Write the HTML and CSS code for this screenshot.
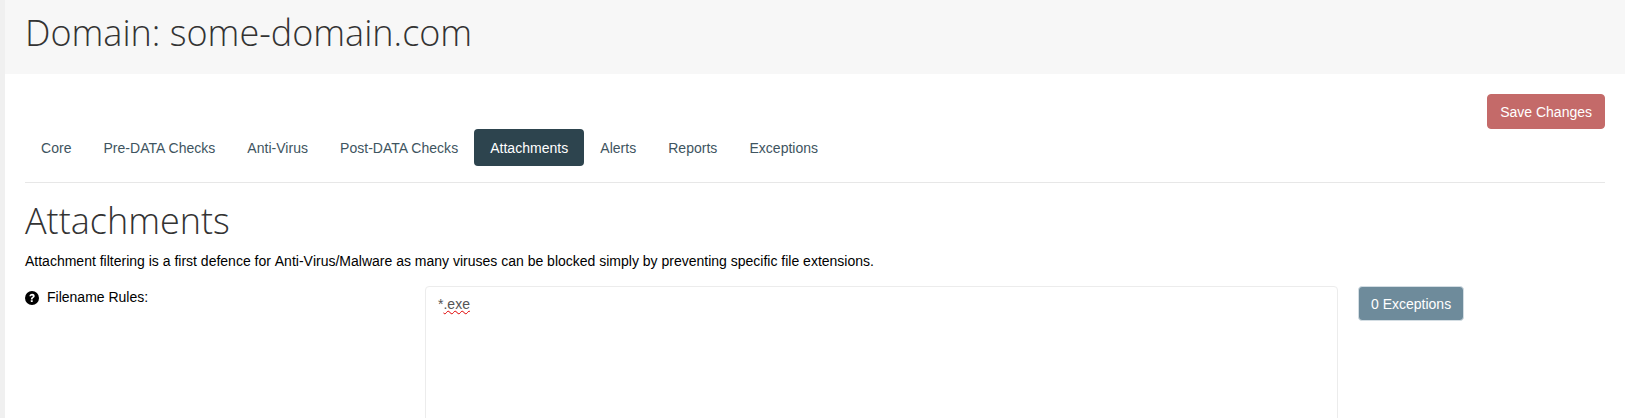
FILE: index.html
```html
<!DOCTYPE html>
<html lang="en">
<head>
<meta charset="utf-8">
<title>Domain: some-domain.com</title>
<link rel="stylesheet" href="styles.css">
</head>
<body>
<div class="page">
  <header class="page-header">
    <h1 class="page-title">Domain: some-domain.com</h1>
  </header>
  <main class="content">
    <div class="actions">
      <button class="btn btn-save" type="button">Save Changes</button>
    </div>
    <nav class="tabs">
      <a class="tab">Core</a>
      <a class="tab">Pre-DATA Checks</a>
      <a class="tab">Anti-Virus</a>
      <a class="tab">Post-DATA Checks</a>
      <a class="tab active">Attachments</a>
      <a class="tab">Alerts</a>
      <a class="tab">Reports</a>
      <a class="tab">Exceptions</a>
    </nav>
    <h2 class="section-title">Attachments</h2>
    <p class="intro">Attachment filtering is a first defence for Anti-Virus/Malware as many viruses can be blocked simply by preventing specific file extensions.</p>
    <div class="form-row">
      <div class="label">
        <svg class="help-icon" viewBox="0 0 24 24" aria-hidden="true">
          <circle cx="12" cy="12" r="12" fill="#000"/>
          <path d="M7.6 9.2c0-2.6 2-4.3 4.6-4.3 2.5 0 4.4 1.5 4.4 3.8 0 1.7-1 2.6-2.2 3.4-1 .6-1.3 1-1.3 1.9v.4h-3v-.8c0-1.6.7-2.4 1.8-3.1 1-.6 1.5-1 1.5-1.7 0-.8-.6-1.3-1.5-1.3-1 0-1.6.7-1.6 1.7H7.6z" fill="#fff"/>
          <rect x="10" y="15.7" width="3.2" height="3.2" rx=".4" fill="#fff"/>
        </svg>
        <span>Filename Rules:</span>
      </div>
      <div class="rules-box">*<span class="misspelt">.exe</span></div>
      <button class="btn btn-exceptions" type="button">0 Exceptions</button>
    </div>
  </main>
</div>
</body>
</html>
```
FILE: styles.css
```css
* { box-sizing: border-box; }
html, body { margin: 0; height: 418px; overflow: hidden; }
body {
  background: #f0f0f0;
  padding-left: 5px;
  font-family: "Liberation Sans", Arial, sans-serif;
  font-size: 14px;
  line-height: 20px;
  color: #000;
  font-kerning: none;
}
.page { background: #fff; height: 418px; overflow: hidden; }
.page-header {
  background: #f7f7f7;
  height: 74px;
  padding: 13px 20px 0;
}
.page-title, .section-title {
  margin: 0;
  font-family: "Open Sans", sans-serif;
  font-weight: 300;
  font-size: 36px;
  line-height: 40px;
  color: #333;
  font-kerning: normal;
}
.content { padding: 20px 20px 0; }
.actions { display: flex; justify-content: flex-end; }
.btn {
  border-radius: 4px;
  font-family: inherit;
  font-size: 14px;
  line-height: 20px;
  color: #fff;
  padding: 7px 12px;
  height: 35px;
  font-kerning: none;
}
.btn-save {
  background: #c46a69;
  border: 1px solid #c46a69;
}
.tabs {
  display: flex;
  padding-bottom: 16px;
  border-bottom: 1px solid #e7e7e7;
  margin-bottom: 18px;
  font-kerning: normal;
  letter-spacing: .025px;
}
.tab {
  padding: 9px 16px 8px;
  height: 37px;
  line-height: 20px;
  border-radius: 4px;
  color: #3e5460;
}
.tab.active { background: #2d444e; color: #fff; }
.section-title { margin-bottom: 10px; height: 40px; }
.intro { margin: 0 0 15px; }
.form-row { display: flex; align-items: flex-start; }
.label {
  width: 400px;
  display: flex;
  align-items: flex-start;
  gap: 8px;
  padding-top: 1px;
  color: #000;
}
.help-icon { width: 14px; height: 14px; flex: none; margin-top: 4px; }
.rules-box {
  width: 913px;
  height: 200px;
  flex: none;
  border: 1px solid #ececec;
  border-radius: 4px;
  padding: 7px 12px;
  color: #555;
}
.misspelt { text-decoration: underline wavy #e00000; text-decoration-thickness: 1px; }
.btn-exceptions {
  margin-left: 20px;
  background: #6e8b9b;
  border: 1px solid #d3dde3;
}
```
